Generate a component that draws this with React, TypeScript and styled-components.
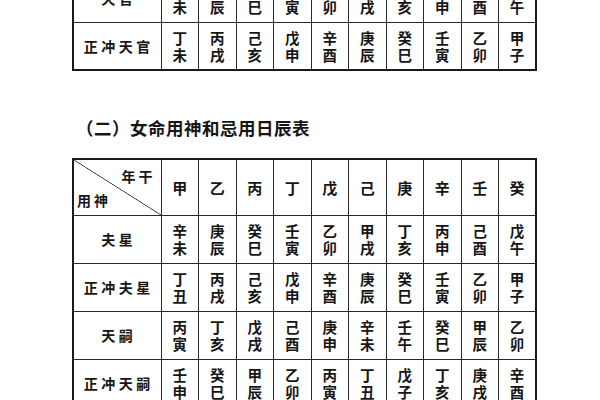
import React from 'react';
import styled, {createGlobalStyle} from 'styled-components';

const stems = ['甲', '乙', '丙', '丁', '戊', '己', '庚', '辛', '壬', '癸'];

const officialRows: {label: string, cells: string[]}[] = [
    {label: '天官', cells: ['辛未', '庚辰', '癸巳', '壬寅', '乙卯', '甲戌', '丁亥', '丙申', '己酉', '戊午']},
    {label: '正冲天官', cells: ['丁未', '丙戌', '己亥', '戊申', '辛酉', '庚辰', '癸巳', '壬寅', '乙卯', '甲子']},
];

const femaleRows: {label: string, cells: string[]}[] = [
    {label: '夫星', cells: ['辛未', '庚辰', '癸巳', '壬寅', '乙卯', '甲戌', '丁亥', '丙申', '己酉', '戊午']},
    {label: '正冲夫星', cells: ['丁丑', '丙戌', '己亥', '戊申', '辛酉', '庚辰', '癸巳', '壬寅', '乙卯', '甲子']},
    {label: '天嗣', cells: ['丙寅', '丁亥', '戊戌', '己酉', '庚申', '辛未', '壬午', '癸巳', '甲辰', '乙卯']},
    {label: '正冲天嗣', cells: ['壬申', '癸巳', '甲辰', '乙卯', '丙寅', '丁丑', '戊子', '丁亥', '庚戌', '辛酉']},
];

const Global = createGlobalStyle`
html, body {
    margin: 0;
    padding: 0;
    background: #fff;
}
body {
    font-family: "Noto Sans CJK SC", "Noto Sans", sans-serif;
    color: #161616;
}
`;

const Page = styled.div`
width: 600px;
height: 400px;
overflow: hidden;
padding-left: 72px;
box-sizing: border-box;
`;

const Table = styled.table<{$top?: number}>`
border-collapse: collapse;
table-layout: fixed;
width: 465px;
margin-top: ${p => p.$top ?? 0}px;
border: 2px solid #1a1a1a;

td {
    border: 1px solid #2a2a2a;
    padding: 0;
    text-align: center;
    vertical-align: middle;
    font-weight: 700;
}
`;

const Row = styled.tr<{$h: number}>`
height: ${p => p.$h}px;
`;

const LabelCell = styled.td`
font-size: 14px;
letter-spacing: 3.5px;
padding-left: 3px !important;
`;

const PairCell = styled.td`
font-size: 14.5px;
line-height: 17px;
`;

const StemCell = styled.td`
font-size: 15px;
`;

const Corner = styled.td`
position: relative;
background: linear-gradient(to top right, transparent calc(50% - 0.7px), #222 50%, transparent calc(50% + 0.7px));
font-size: 14px;
`;

const CornerTop = styled.div`
position: absolute;
top: 6px;
right: 5px;
letter-spacing: 3px;
`;

const CornerBottom = styled.div`
position: absolute;
bottom: 5px;
left: 3px;
letter-spacing: 3px;
`;

const Title = styled.div`
margin: 47px 0 20px 4px;
font-size: 17.5px;
font-weight: 700;
letter-spacing: 0.5px;
height: 20px;
line-height: 20px;
`;

const Cols = () => (
    <colgroup>
        <col style={{width: 88}} />
        {stems.map(s => <col key={s} />)}
    </colgroup>
);

const Pair = ({text}: {text: string}) => (
    <PairCell>{text[0]}<br />{text[1]}</PairCell>
);

const App = () => {
    return (
        <Page>
            <Global />
            <Table $top={-27}>
                <Cols />
                <tbody>
                    {officialRows.map(r => (
                        <Row $h={48} key={r.label}>
                            <LabelCell>{r.label}</LabelCell>
                            {r.cells.map((c, i) => <Pair key={i} text={c} />)}
                        </Row>
                    ))}
                </tbody>
            </Table>

            <Title>（二）女命用神和忌用日辰表</Title>

            <Table>
                <Cols />
                <tbody>
                    <Row $h={56}>
                        <Corner>
                            <CornerTop>年干</CornerTop>
                            <CornerBottom>用神</CornerBottom>
                        </Corner>
                        {stems.map(s => <StemCell key={s}>{s}</StemCell>)}
                    </Row>
                    {femaleRows.map(r => (
                        <Row $h={48} key={r.label}>
                            <LabelCell>{r.label}</LabelCell>
                            {r.cells.map((c, i) => <Pair key={i} text={c} />)}
                        </Row>
                    ))}
                </tbody>
            </Table>
        </Page>
    );
};

export default App;
